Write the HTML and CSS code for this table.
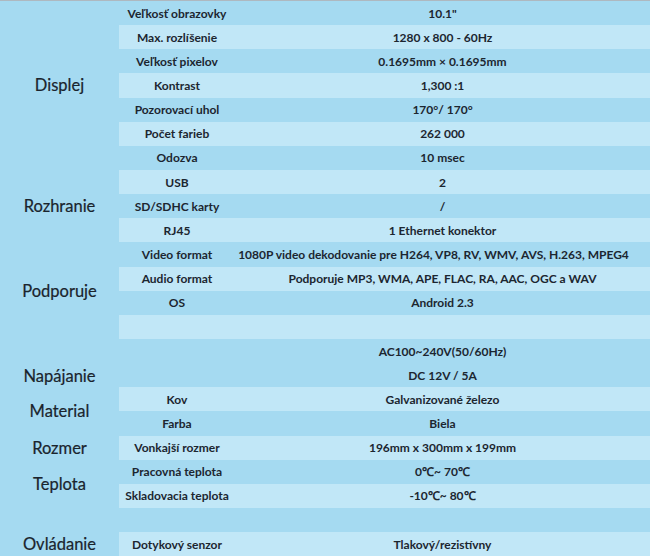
FILE: index.html
```html
<!DOCTYPE html>
<html lang="sk">
<head>
<meta charset="utf-8">
<title>Špecifikácia</title>
<link rel="stylesheet" href="styles.css">
</head>
<body>
<div class="spec">
  <div class="cat c-displej">Displej</div>
  <div class="cat c-rozhranie">Rozhranie</div>
  <div class="cat c-podporuje">Podporuje</div>
  <div class="cat c-napajanie">Napájanie</div>
  <div class="cat c-material">Material</div>
  <div class="cat c-rozmer">Rozmer</div>
  <div class="cat c-teplota">Teplota</div>
  <div class="cat c-ovladanie">Ovládanie</div>

  <div class="row dark"><span class="sub">Veľkosť obrazovky</span><span class="val">10.1"</span></div>
  <div class="row light"><span class="sub">Max. rozlíšenie</span><span class="val">1280 x 800 - 60Hz</span></div>
  <div class="row dark"><span class="sub">Veľkosť pixelov</span><span class="val">0.1695mm × 0.1695mm</span></div>
  <div class="row light"><span class="sub">Kontrast</span><span class="val">1,300 :1</span></div>
  <div class="row dark"><span class="sub">Pozorovací uhol</span><span class="val">170°/ 170°</span></div>
  <div class="row light"><span class="sub">Počet farieb</span><span class="val">262 000</span></div>
  <div class="row dark"><span class="sub">Odozva</span><span class="val">10 msec</span></div>
  <div class="row light"><span class="sub">USB</span><span class="val">2</span></div>
  <div class="row dark"><span class="sub">SD/SDHC karty</span><span class="val">/</span></div>
  <div class="row light"><span class="sub">RJ45</span><span class="val">1 Ethernet konektor</span></div>
  <div class="row dark"><span class="sub">Video format</span><span class="val val-wide">1080P video dekodovanie pre H264, VP8, RV, WMV, AVS, H.263, MPEG4</span></div>
  <div class="row light"><span class="sub">Audio format</span><span class="val">Podporuje MP3, WMA, APE, FLAC, RA, AAC, OGC a WAV</span></div>
  <div class="row dark"><span class="sub">OS</span><span class="val">Android 2.3</span></div>
  <div class="row light"><span class="sub"></span><span class="val"></span></div>
  <div class="row dark"><span class="sub"></span><span class="val">AC100~240V(50/60Hz)</span></div>
  <div class="row dark"><span class="sub"></span><span class="val">DC 12V / 5A</span></div>
  <div class="row light"><span class="sub">Kov</span><span class="val">Galvanizované železo</span></div>
  <div class="row dark"><span class="sub">Farba</span><span class="val">Biela</span></div>
  <div class="row light"><span class="sub">Vonkajší rozmer</span><span class="val">196mm x 300mm x 199mm</span></div>
  <div class="row dark"><span class="sub">Pracovná teplota</span><span class="val">0℃~ 70℃</span></div>
  <div class="row light"><span class="sub">Skladovacia teplota</span><span class="val">-10℃~ 80℃</span></div>
  <div class="row dark"><span class="sub"></span><span class="val"></span></div>
  <div class="row light"><span class="sub">Dotykový senzor</span><span class="val">Tlakový/rezistívny</span></div>
</div>
</body>
</html>
```
FILE: styles.css
```css
html, body {
  margin: 0;
  padding: 0;
  background: #ffffff;
}

.spec {
  width: 650px;
  display: grid;
  grid-template-columns: 119px 1fr;
  grid-template-rows: repeat(23, 24.15px);
  border-top: 1px solid #aeb8c0;
  background: #a5daf1;
  font-family: Lato, "Open Sans", sans-serif;
  color: #1c2630;
}

.cat {
  grid-column: 1;
  display: flex;
  align-items: center;
  justify-content: center;
  font-size: 16.5px;
  font-weight: 400;
  color: #1a242d;
  -webkit-text-stroke: 0.2px #1a242d;
}

.c-displej { grid-row: 1 / 8; }
.c-rozhranie { grid-row: 8 / 11; }
.c-podporuje { grid-row: 11 / 15; }
.c-napajanie { grid-row: 15 / 17; padding-top: 26px; }
.c-material { grid-row: 17 / 19; }
.c-rozmer { grid-row: 19 / 20; }
.c-teplota { grid-row: 20 / 22; }
.c-ovladanie { grid-row: 23 / 24; }

.row {
  grid-column: 2;
  display: grid;
  grid-template-columns: 116px 1fr;
  align-items: center;
  font-size: 12px;
  font-weight: 700;
}

.dark { background: #a5daf1; }
.light { background: #c1e7f7; }

.sub, .val {
  text-align: center;
  white-space: nowrap;
}

.val-wide {
  margin-right: 18px;
}
```
